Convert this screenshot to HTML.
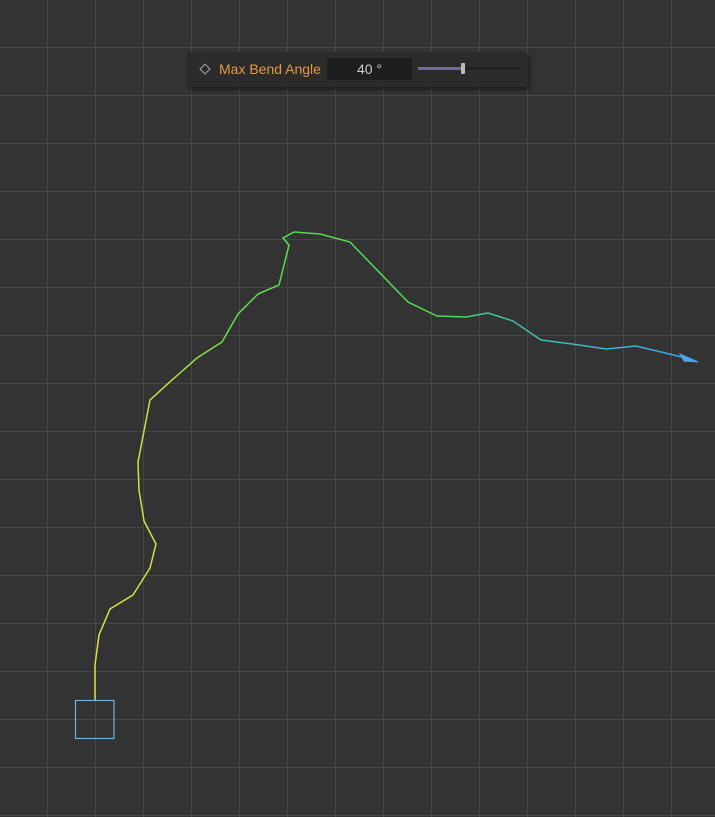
<!DOCTYPE html>
<html><head><style>
body{margin:0;width:715px;height:817px;overflow:hidden;background:#333333;font-family:"Liberation Sans",sans-serif;}
.grid{position:absolute;left:0;top:0;width:715px;height:817px;
background-image:linear-gradient(to right,#454545 1px,transparent 1px),linear-gradient(to bottom,#454545 1px,transparent 1px);
background-size:48px 48px;background-position:47px 47px;}
.bar{position:absolute;left:187px;top:52px;width:341px;height:35px;background:#2b2b2b;border-radius:3px;box-shadow:2px 3px 5px rgba(0,0,0,0.45);}
.dia{position:absolute;left:14px;top:13px;width:6px;height:6px;border:1.3px solid #aaa;transform:rotate(45deg);}
.lbl{position:absolute;left:32px;top:9px;font-size:14px;color:#e39a44;}
.inp{position:absolute;left:140px;top:6px;width:85px;height:22px;background:#1e1e1e;border-radius:2px;color:#ccc;font-size:14px;text-align:center;line-height:22px;}
.trk{position:absolute;left:231px;top:15px;width:102px;height:3px;background:#202020;}
.fill{position:absolute;left:231px;top:15px;width:45px;height:3px;background:#6a6aaa;}
.th{position:absolute;left:274px;top:11px;width:4px;height:11px;background:#bbb;border-radius:1px;}
</style></head><body>
<div class="grid"></div>
<svg width="715" height="817" style="position:absolute;left:0;top:0">
<defs><linearGradient id="g" gradientUnits="userSpaceOnUse" x1="95" y1="700" x2="690" y2="360">
<stop offset="0" stop-color="#e2e23a"/><stop offset="0.3" stop-color="#c8e238"/><stop offset="0.45" stop-color="#5ee048"/><stop offset="0.72" stop-color="#44e050"/><stop offset="0.8" stop-color="#3ec0a8"/><stop offset="1" stop-color="#3ea6e0"/></linearGradient></defs>
<polyline fill="none" stroke="url(#g)" stroke-width="1.5" points="95,700 95,665 99,635 110,609 133,595 150,568 156,544 144,521 139,490 138,462 150,400 172,380 197,358 222,342 238,314 258,294 279,285 289,245 283,238 294,232 320,234 350,242 378,271 408,302 437,316 466,317 488,313 513,321 541,340 572,344 606,349 636,346 682,357"/>
<polygon points="698,362 680,354 684,361" fill="#4aa8e8" stroke="#4aa8e8" stroke-width="1"/>
<rect x="75.5" y="700.5" width="38.5" height="38" fill="none" stroke="#6ab4e0" stroke-width="1.2"/>
</svg>
<div class="bar"><div class="dia"></div><div class="lbl">Max Bend Angle</div><div class="inp">40 °</div><div class="trk"></div><div class="fill"></div><div class="th"></div></div>
</body></html>
